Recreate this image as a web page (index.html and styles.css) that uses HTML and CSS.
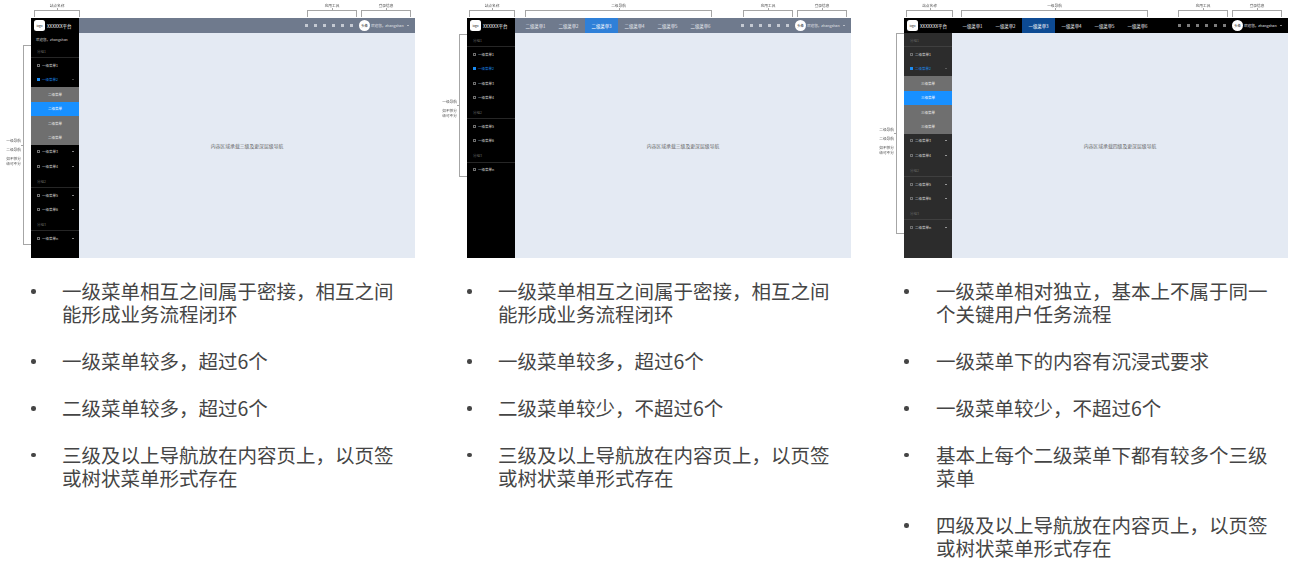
FILE: index.html
```html
<!DOCTYPE html>
<html lang="zh-CN">
<head>
<meta charset="utf-8">
<title>导航结构对比</title>
<link rel="stylesheet" href="styles.css">
</head>
<body>
<main class="page">

<section class="scheme">
  <div class="wf wf-a">
    <div class="bracket site"><span>站点名称</span></div>
    <div class="bracket tools-b"><span>应用工具</span></div>
    <div class="bracket login-b"><span>登录信息</span></div>
    <div class="rail"><div class="rail-note"><p>一级导航</p><p>二级导航</p><p class="tight">如不够分</p><p>级可不分</p></div></div>
    <header class="bar">
      <div class="brand"><span class="logo">logo</span><span>XXXXXX平台</span></div>
      <div class="tools"><i></i><i></i><i></i><i></i><i></i><i></i></div>
      <div class="user"><span class="avatar">头像</span><span class="name">欢迎您，zhangshan</span><b class="caret"></b></div>
    </header>
    <div class="main">
      <nav class="side">
        <div class="hello">欢迎您，zhangshan</div>
        <div class="group">分组1</div>
        <div class="item"><i></i><span>一级菜单1</span></div>
        <div class="item on"><i></i><span>一级菜单2</span><b class="caret up"></b></div>
        <div class="sub">二级菜单</div>
        <div class="sub on">二级菜单</div>
        <div class="sub">二级菜单</div>
        <div class="sub">二级菜单</div>
        <div class="item"><i></i><span>一级菜单3</span><b class="caret"></b></div>
        <div class="item"><i></i><span>一级菜单4</span><b class="caret"></b></div>
        <div class="group">分组2</div>
        <div class="item"><i></i><span>一级菜单5</span><b class="caret"></b></div>
        <div class="item"><i></i><span>一级菜单6</span><b class="caret"></b></div>
        <div class="group">分组3</div>
        <div class="item"><i></i><span>一级菜单n</span><b class="caret"></b></div>
      </nav>
      <div class="content">内容区域承载三级及更深层级导航</div>
    </div>
  </div>
  <ul class="notes">
    <li>一级菜单相互之间属于密接，相互之间能形成业务流程闭环</li>
    <li>一级菜单较多，超过6个</li>
    <li>二级菜单较多，超过6个</li>
    <li>三级及以上导航放在内容页上，以页签或树状菜单形式存在</li>
  </ul>
</section>

<section class="scheme">
  <div class="wf wf-b">
    <div class="bracket site"><span>站点名称</span></div>
    <div class="bracket nav-b"><span>二级导航</span></div>
    <div class="bracket tools-b"><span>应用工具</span></div>
    <div class="bracket login-b"><span>登录信息</span></div>
    <div class="rail"><div class="rail-note"><p>一级导航</p><p class="tight">如不够分</p><p>级可不分</p></div></div>
    <header class="bar">
      <div class="brand"><span class="logo">logo</span><span>XXXXXX平台</span></div>
      <div class="topnav"><a>二级菜单1</a><a>二级菜单2</a><a class="on">二级菜单3</a><a>二级菜单4</a><a>二级菜单5</a><a>二级菜单6</a></div>
      <div class="tools"><i></i><i></i><i></i><i></i><i></i><i></i></div>
      <div class="user"><span class="avatar">头像</span><span class="name">欢迎您，zhangshan</span><b class="caret"></b></div>
    </header>
    <div class="main">
      <nav class="side">
        <div class="group">分组1</div>
        <div class="item"><i></i><span>一级菜单1</span></div>
        <div class="item on"><i></i><span>一级菜单2</span></div>
        <div class="item"><i></i><span>一级菜单3</span></div>
        <div class="item"><i></i><span>一级菜单4</span></div>
        <div class="group">分组2</div>
        <div class="item"><i></i><span>一级菜单5</span></div>
        <div class="item"><i></i><span>一级菜单6</span></div>
        <div class="group">分组3</div>
        <div class="item"><i></i><span>一级菜单n</span></div>
      </nav>
      <div class="content">内容区域承载三级及更深层级导航</div>
    </div>
  </div>
  <ul class="notes">
    <li>一级菜单相互之间属于密接，相互之间能形成业务流程闭环</li>
    <li>一级菜单较多，超过6个</li>
    <li>二级菜单较少，不超过6个</li>
    <li>三级及以上导航放在内容页上，以页签或树状菜单形式存在</li>
  </ul>
</section>

<section class="scheme">
  <div class="wf wf-c">
    <div class="bracket site"><span>站点名称</span></div>
    <div class="bracket nav-b"><span>一级导航</span></div>
    <div class="bracket tools-b"><span>应用工具</span></div>
    <div class="bracket login-b"><span>登录信息</span></div>
    <div class="rail"><div class="rail-note"><p>二级导航</p><p>二级导航</p><p class="tight">如不够分</p><p>级可不分</p></div></div>
    <header class="bar">
      <div class="brand"><span class="logo">logo</span><span>XXXXXXX平台</span></div>
      <div class="topnav"><a>一级菜单1</a><a>一级菜单2</a><a class="on">一级菜单3</a><a>一级菜单4</a><a>一级菜单5</a><a>一级菜单6</a></div>
      <div class="tools"><i></i><i></i><i></i><i></i><i></i><i></i></div>
      <div class="user"><span class="avatar">头像</span><span class="name">欢迎您，zhangshan</span><b class="caret"></b></div>
    </header>
    <div class="main">
      <nav class="side">
        <div class="group">分组1</div>
        <div class="item"><i></i><span>二级菜单1</span></div>
        <div class="item on"><i></i><span>二级菜单2</span><b class="caret up"></b></div>
        <div class="sub">三级菜单</div>
        <div class="sub on">三级菜单</div>
        <div class="sub">三级菜单</div>
        <div class="sub">三级菜单</div>
        <div class="item"><i></i><span>二级菜单3</span><b class="caret"></b></div>
        <div class="item"><i></i><span>二级菜单4</span><b class="caret"></b></div>
        <div class="group">分组2</div>
        <div class="item"><i></i><span>二级菜单5</span><b class="caret"></b></div>
        <div class="item"><i></i><span>二级菜单6</span><b class="caret"></b></div>
        <div class="group">分组3</div>
        <div class="item"><i></i><span>二级菜单n</span><b class="caret"></b></div>
      </nav>
      <div class="content">内容区域承载四级及更深层级导航</div>
    </div>
  </div>
  <ul class="notes notes-wide">
    <li>一级菜单相对独立，基本上不属于同一个关键用户任务流程</li>
    <li>一级菜单下的内容有沉浸式要求</li>
    <li>一级菜单较少，不超过6个</li>
    <li>基本上每个二级菜单下都有较多个三级菜单</li>
    <li>四级及以上导航放在内容页上，以页签或树状菜单形式存在</li>
  </ul>
</section>

</main>
</body>
</html>
```

FILE: styles.css
```css
* { box-sizing: border-box; }
html, body { margin: 0; height: 100%; background: #fff; }
body { font-family: "Noto Sans CJK SC", "Noto Sans", sans-serif; overflow: hidden; }

.page {
  display: grid;
  grid-template-columns: 436px 437px 384px;
  padding: 18px 0 0 31px;
}

/* wireframe */
.wf { position: relative; width: 384px; height: 240px; display: flex; flex-direction: column; filter: blur(.3px); }
.bar { flex: 0 0 15px; display: flex; align-items: center; background: #6f7a8d; color: #fff; }
.brand {
  flex: 0 0 48px; height: 100%;
  display: flex; align-items: center; gap: 2px;
  padding-left: 3px;
  background: #000; color: #fff;
  font-size: 4.5px; white-space: nowrap;
}
.logo {
  flex: 0 0 11px; height: 11px;
  display: flex; align-items: center; justify-content: center;
  background: #fff; color: #222; border-radius: 2.5px;
  font-size: 3px;
}
.topnav { display: flex; height: 100%; padding-left: 4px; }
.topnav a {
  flex: 0 0 33px;
  display: flex; align-items: center; justify-content: center;
  font-size: 4.4px; color: #e6e9ef;
}
.topnav a.on { background: #2f80d8; color: #fff; }
.tools { display: flex; gap: 6px; margin-left: auto; }
.tools i { width: 3px; height: 3px; background: #c4c9d2; }
.user { display: flex; align-items: center; margin-left: 6px; padding-right: 6px; font-size: 3.6px; color: #e4e6ea; white-space: nowrap; }
.avatar {
  width: 11px; height: 11px; border-radius: 50%;
  display: flex; align-items: center; justify-content: center;
  background: #fff; color: #222; font-size: 3.2px;
}
.name { width: 34px; margin-left: 1px; }
.caret { width: 0; height: 0; margin-left: 2px; border: 1.2px solid transparent; border-top: 1.6px solid #fff; border-bottom: 0; }
.caret.up { border-top-color: #888; }

.main { flex: 1; display: flex; min-height: 0; }
.side { flex: 0 0 48px; background: #000; color: #ddd; font-size: 3.5px; }
.hello { height: 11px; padding: 4px 0 0 5px; line-height: 5px; color: #ddd; white-space: nowrap; }
.group { height: 14.4px; padding: 5px 0 0 6px; line-height: 5px; color: #666; border-bottom: 1px solid #262626; }
.item { height: 14.4px; display: flex; align-items: center; padding: 0 5px 0 6px; white-space: nowrap; }
.item i { flex: 0 0 3px; height: 3px; margin-right: 2px; border: .7px solid #6e6e6e; }
.item span { flex: 1; }
.item.on { color: #1b8cf2; }
.item.on i { background: #1b8cf2; border-color: #1b8cf2; }
.sub {
  height: 14.4px;
  display: flex; align-items: center; justify-content: center;
  background: #6f6f6f; color: #eee;
}
.sub.on { background: #1890ff; color: #fff; }
.content {
  flex: 1;
  display: flex; align-items: center; justify-content: center;
  background: #e4eaf3; color: #666; font-size: 4.85px;
}

/* variants */
.wf-c .bar { background: #000; }
.wf-c .topnav a.on { background: #0d4a92; }
.wf-c .tools i { background: #7c7c7c; }
.wf-c .side { background: #2c2c2c; }
.wf-c .group { border-bottom-color: #3f3f3f; }

/* annotations */
.bracket {
  position: absolute; top: -8px; height: 7px;
  border: 1px solid #a6a6a6; border-bottom: 0;
}
.bracket::before {
  content: ""; position: absolute; left: 50%; top: -3px;
  width: 1px; height: 3px; background: #a6a6a6;
}
.bracket span {
  position: absolute; left: 50%; top: -8px;
  transform: translateX(-50%);
  font-size: 3.7px; line-height: 5px; color: #555; white-space: nowrap;
}
.site { left: 3px; width: 46px; }
.tools-b { left: 276px; width: 50px; }
.login-b { left: 330px; width: 50px; }
.wf-b .site { left: 2px; width: 46px; }
.wf-b .nav-b { left: 58px; width: 187px; }
.wf-c .site { left: 2px; width: 47px; }
.wf-c .nav-b { left: 57px; width: 187px; }
.wf-c .tools-b { left: 274px; }
.wf-c .login-b { left: 328px; }

.rail {
  position: absolute; left: -8px; width: 8px;
  border: 1px solid #a6a6a6; border-right: 0;
}
.rail::before {
  content: ""; position: absolute; left: -3px;
  width: 3px; height: 1px; background: #a6a6a6;
}
.rail-note {
  position: absolute; right: calc(100% + 3px);
  font-size: 3.7px; line-height: 5px; color: #555; text-align: center; white-space: nowrap;
}
.rail-note p { margin: 0 0 4px; }
.rail-note p.tight { margin-bottom: 0; }
.wf-a .rail { top: 27px; height: 200px; }
.wf-a .rail::before { top: 99px; }
.wf-a .rail-note { top: 92px; }
.wf-b .rail { top: 16px; height: 143px; }
.wf-b .rail::before { top: 70px; }
.wf-b .rail-note { top: 64px; }
.wf-c .rail { top: 15px; height: 201px; }
.wf-c .rail::before { top: 99px; }
.wf-c .rail-note { top: 93px; }

/* notes */
.notes { list-style: none; margin: 21px 0 0; padding: 0; width: 368px; }
.notes li {
  position: relative;
  margin-bottom: 23.4px;
  padding-left: 31px;
  font-size: 19.5px; line-height: 23.4px; color: #454545;
}
.notes li::before {
  content: ""; position: absolute; left: 0; top: 10px;
  width: 4.5px; height: 4.5px; border-radius: 50%; background: #454545;
}
.notes-wide li { padding-left: 32px; }
```
